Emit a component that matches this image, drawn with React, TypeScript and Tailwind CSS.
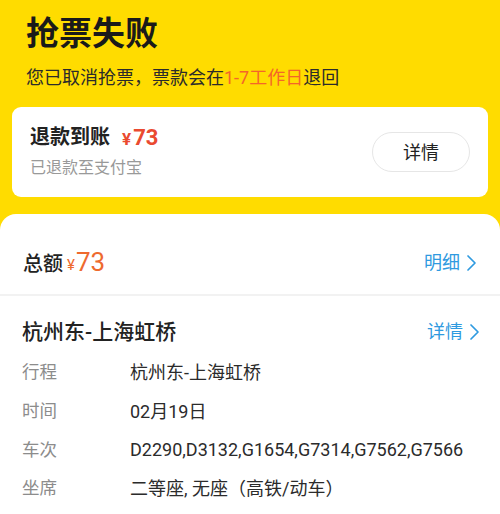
function Chevron() {
  return (
    <svg width="12" height="18" viewBox="0 0 12 18" className="ml-[5px]" fill="none">
      <polyline points="3,2 10,9 3,16" stroke="#2f9ae0" strokeWidth="1.7" strokeLinecap="round" strokeLinejoin="round" />
    </svg>
  );
}

const rows = [
  { label: "行程", value: "杭州东-上海虹桥" },
  { label: "时间", value: "02月19日" },
  { label: "车次", value: "D2290,D3132,G1654,G7314,G7562,G7566" },
  { label: "坐席", value: "二等座, 无座（高铁/动车）" },
];

export default function App() {
  return (
    <main
      className="min-h-screen w-[500px] h-[514px] overflow-hidden bg-[#ffdc00]"
      style={{ fontFamily: 'Roboto, "Noto Sans CJK SC", sans-serif' }}
    >
      <div className="px-[26px] pt-[14px]">
        <h1 className="text-[33px] leading-[40px] font-bold text-[#1a1a1a]">抢票失败</h1>
        <p className="mt-[12px] text-[18px] leading-[24px] text-[#2b2b2b]">
          您已取消抢票，票款会在<span className="text-[#f4652a]">1-7工作日</span>退回
        </p>
      </div>

      <div className="mx-[12px] mt-[17px] flex h-[90px] items-center justify-between rounded-[9px] bg-white pl-[18px] pr-[18px]">
        <div className="flex flex-col">
          <div className="flex h-[26px] items-center">
            <span className="text-[20px] font-bold text-[#222]">退款到账</span>
            <span className="ml-[12px] text-[22px] font-bold text-[#ea4a30]">
              <span className="mr-[2px] text-[17px]">¥</span>73
            </span>
          </div>
          <div className="mt-[6px] h-[24px] text-[16px] leading-[24px] text-[#999]">已退款至支付宝</div>
        </div>
        <button className="flex h-[40px] w-[98px] items-center justify-center rounded-full border border-[#e6e6e6] text-[18px] text-[#222]">
          详情
        </button>
      </div>

      <div className="mt-[17px] h-[300px] rounded-t-[16px] bg-white">
        <div className="flex items-center justify-between pl-[23px] pr-[23px] pt-[35px] pb-[17px]">
          <div className="flex h-[28px] items-end">
            <span className="text-[20px] leading-[26px] font-medium text-[#222]">总额</span>
            <span className="ml-[4px] text-[15px] leading-[23px] text-[#ee6a2e]">¥</span>
            <span className="ml-[1px] text-[26px] leading-[29px] text-[#ee6a2e]">73</span>
          </div>
          <div className="flex items-center text-[18px] leading-[28px] text-[#2f9ae0]">
            明细
            <Chevron />
          </div>
        </div>
        <div className="h-[2px] bg-[#f2f2f2]" />
        <div className="flex items-center justify-between pl-[22px] pr-[20px] pt-[22px]">
          <span className="text-[21px] leading-[28px] font-medium text-[#222]">杭州东-上海虹桥</span>
          <div className="flex items-center text-[18px] leading-[28px] text-[#2f9ae0]">
            详情
            <Chevron />
          </div>
        </div>
        <div className="mt-[7px] flex flex-col pl-[22px]">
          {rows.map((r) => (
            <div key={r.label} className="flex h-[38.7px] items-center">
              <span className="w-[108px] text-[17.5px] text-[#8c8c8c]">{r.label}</span>
              <span className="text-[18px] text-[#2b2b2b]">{r.value}</span>
            </div>
          ))}
        </div>
      </div>
    </main>
  );
}
